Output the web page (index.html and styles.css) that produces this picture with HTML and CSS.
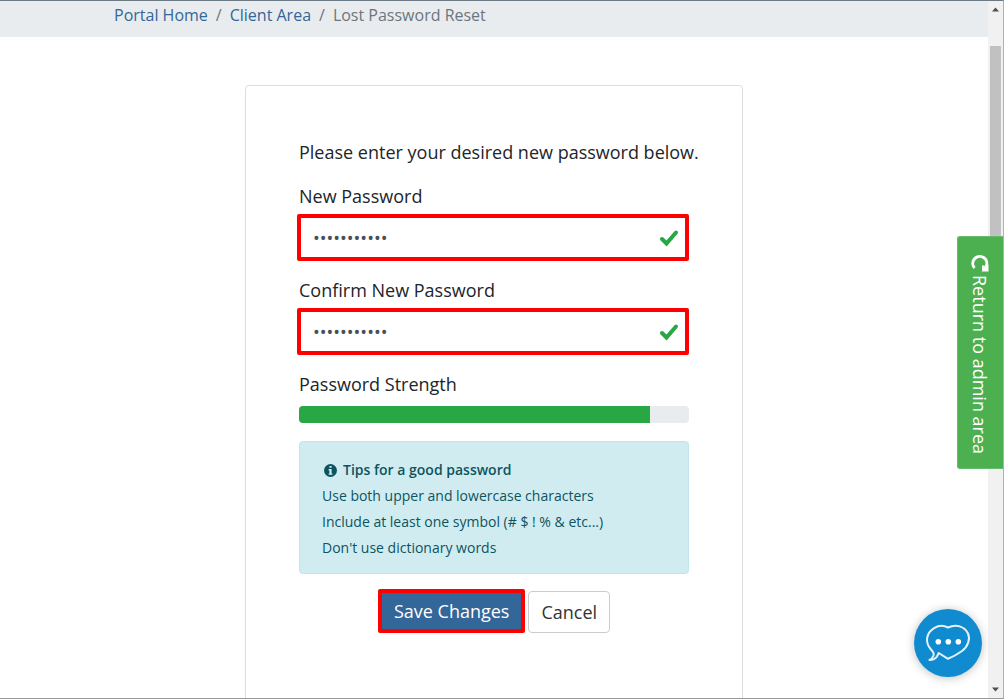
FILE: index.html
```
<!DOCTYPE html>
<html lang="en">
<head>
    <meta charset="utf-8">
    <title>Lost Password Reset</title>
    <link rel="stylesheet" href="styles.css">
</head>
<body>
    <div class="window">
        <div class="page">
            <nav class="breadcrumb">
                <a href="#">Portal Home</a>
                <span class="divider">/</span>
                <a href="#">Client Area</a>
                <span class="divider">/</span>
                <span>Lost Password Reset</span>
            </nav>

            <main class="card">
                <p class="intro">Please enter your desired new password below.</p>
                <form>
                    <div class="form-group">
                        <label for="newPassword">New Password</label>
                        <div class="field">
                            <input type="password" id="newPassword" value="Passw0rd#12">
                            <svg class="tick" viewBox="0 0 20 18"><path d="M3 10l4.500 4.500L17 3.500"/></svg>
                        </div>
                    </div>
                    <div class="form-group">
                        <label for="confirmPassword">Confirm New Password</label>
                        <div class="field">
                            <input type="password" id="confirmPassword" value="Passw0rd#12">
                            <svg class="tick" viewBox="0 0 20 18"><path d="M3 10l4.500 4.500L17 3.500"/></svg>
                        </div>
                    </div>
                    <div class="form-group">
                        <span class="label" id="strengthLabel">Password Strength</span>
                        <div class="progress" role="progressbar" aria-labelledby="strengthLabel" aria-valuenow="90" aria-valuemin="0" aria-valuemax="100">
                            <div class="progress-bar" style="width: 90%"></div>
                        </div>
                    </div>
                    <div class="tips">
                        <strong>
                            <svg class="info" viewBox="0 0 12 12"><circle cx="6" cy="6" r="6"/><path d="M5 1.800h2v1.700H5zM4.300 4.700H7v4h.8V10H4.300V8.700H5V6h-.7z"/></svg>
                            Tips for a good password
                        </strong>
                        <p>Use both upper and lowercase characters</p>
                        <p>Include at least one symbol (# $ ! % &amp; etc...)</p>
                        <p>Don't use dictionary words</p>
                    </div>
                    <div class="actions">
                        <button type="submit" class="btn btn-primary">Save Changes</button>
                        <button type="reset" class="btn btn-default">Cancel</button>
                    </div>
                </form>
            </main>
        </div>

        <div class="scrollbar">
            <svg class="arrow" viewBox="0 0 15 17"><path d="M4 10.500h7L7.500 6.500z"/></svg>
            <div class="track"><div class="thumb"></div></div>
            <svg class="arrow" viewBox="0 0 15 17"><path d="M4 6.500h7l-3.500 4z"/></svg>
        </div>
    </div>

    <a href="#" class="return-admin">
        <svg viewBox="0 0 18 20"><path class="arc" d="M3.500 15A7 7 0 1 1 14.800 14"/><path class="head" d="M17.500 11.500V18.500H10.500z"/><path class="head" d="M11 12.500h2l2 2-2 3h-2z"/></svg>
        <span>Return to admin area</span>
    </a>

    <button type="button" class="chat" aria-label="Chat">
        <svg viewBox="0 0 68 68">
            <path d="M34 18.500C30 16.500 25 16.300 20.500 18.800C11.500 24 11 34 17 40.500Q20.500 44 19.500 46.500Q18.500 49.500 15.500 51Q20.500 51 23 47.500L24.700 44L34 49.800Q41 47 48 42C54 37.500 56.500 30 54 24.500C50.500 17 42 15 34 18.500z"/>
            <circle cx="24.300" cy="32.700" r="2.800"/>
            <circle cx="34.300" cy="32.700" r="2.800"/>
            <circle cx="44.300" cy="32.700" r="2.800"/>
        </svg>
    </button>
</body>
</html>
```

FILE: styles.css
```
* {
    box-sizing: border-box;
}
body {
    margin: 0;
    font-family: "Open Sans", "Noto Sans", sans-serif;
    font-size: 18px;
    line-height: 26px;
    color: #212529;
    background: #fff;
}
a {
    color: #336699;
    text-decoration: none;
}
p {
    margin: 0;
}
.window {
    display: flex;
    height: 100vh;
    overflow: hidden;
    border-top: 1px solid #6c7a86;
    border-right: 1px solid #b0b0b0;
    border-bottom: 1px solid #999;
}
.page {
    flex: 1;
    overflow: hidden;
}

/* Breadcrumb */
.breadcrumb {
    display: flex;
    gap: 8px;
    padding: 2px 114px 10px;
    font-size: 16px;
    line-height: 24px;
    color: #6c757d;
    background: #e9ecef;
}

/* Card */
.card {
    max-width: 498px;
    margin: 48px auto 0;
    padding: 53px 53px 80px;
    border: 1px solid #ddd;
    border-radius: 4px;
}
.intro {
    margin-bottom: 18px;
    white-space: nowrap;
}
.form-group {
    margin-bottom: 16px;
}
label, .label {
    display: block;
    margin-bottom: 5px;
}
.field {
    display: flex;
    align-items: center;
    height: 47px;
    margin: 0 0 0 -2px;
    padding: 0 6px 0 12px;
    border: 4px solid #f00;
    border-radius: 2px;
}
.field input {
    flex: 1;
    min-width: 0;
    padding: 0;
    border: none;
    outline: none;
    font: inherit;
    color: #495057;
    background: none;
}
.tick {
    width: 20px;
    height: 18px;
    fill: none;
    stroke: #28a745;
    stroke-width: 4;
    stroke-linecap: round;
}
.progress {
    height: 17px;
    margin: 9px 0 18px;
    overflow: hidden;
    background: #e9ecef;
    border-radius: 4px;
}
.progress-bar {
    height: 100%;
    background: #28a745;
}
.tips {
    padding: 15px 22px 12px;
    font-size: 14px;
    color: #0c5460;
    background: #d1ecf1;
    border: 1px solid #bee5eb;
    border-radius: 4px;
}
.tips strong {
    display: flex;
    align-items: center;
    gap: 6px;
    padding-left: 2px;
    font-weight: 600;
}
.info {
    width: 13px;
    height: 13px;
    fill: #0c5460;
}
.info path {
    fill: #d1ecf1;
}

/* Buttons */
.actions {
    display: flex;
    justify-content: center;
    align-items: flex-end;
    gap: 3px;
    margin-top: 15px;
}
.btn {
    height: 42px;
    padding: 0 12px;
    font: inherit;
    cursor: pointer;
    border: 1px solid #ccc;
    border-radius: 4px;
}
.btn-primary {
    height: 44px;
    color: #fff;
    background: #336699;
    border: 4px solid #f00;
    border-radius: 2px;
}
.btn-default {
    color: #333;
    background: #fff;
}

/* Scrollbar */
.scrollbar {
    display: flex;
    flex-direction: column;
    width: 15px;
    background: #f1f1f1;
}
.arrow {
    width: 15px;
    height: 17px;
    fill: #505050;
}
.track {
    flex: 1;
    padding: 28px 2px 0;
}
.thumb {
    height: 50%;
    background: #c1c1c1;
}

/* Floating items */
.return-admin {
    position: fixed;
    top: 236px;
    right: 1px;
    display: flex;
    flex-direction: column;
    align-items: center;
    gap: 2px;
    width: 46px;
    padding: 16px 2px 14px 0;
    color: #fff;
    background: #4caf50;
    border: 1px solid #69bb6c;
    border-right: none;
    border-radius: 3px 0 0 3px;
}
.return-admin span {
    writing-mode: vertical-rl;
    white-space: nowrap;
}
.return-admin svg {
    flex-shrink: 0;
    width: 18px;
    height: 20px;
}
.arc {
    fill: none;
    stroke: #fff;
    stroke-width: 3;
}
.head {
    fill: #fff;
}
.chat {
    position: fixed;
    right: 22px;
    bottom: 22px;
    width: 68px;
    height: 68px;
    padding: 0;
    border: none;
    border-radius: 50%;
    background: #108bcf;
    box-shadow: 0 1px 10px rgba(0, 0, 0, 0.25);
    cursor: pointer;
}
.chat svg {
    display: block;
    fill: #fff;
}
.chat path {
    fill: none;
    stroke: #e4f3fb;
    stroke-width: 2;
    stroke-linejoin: round;
}
```
